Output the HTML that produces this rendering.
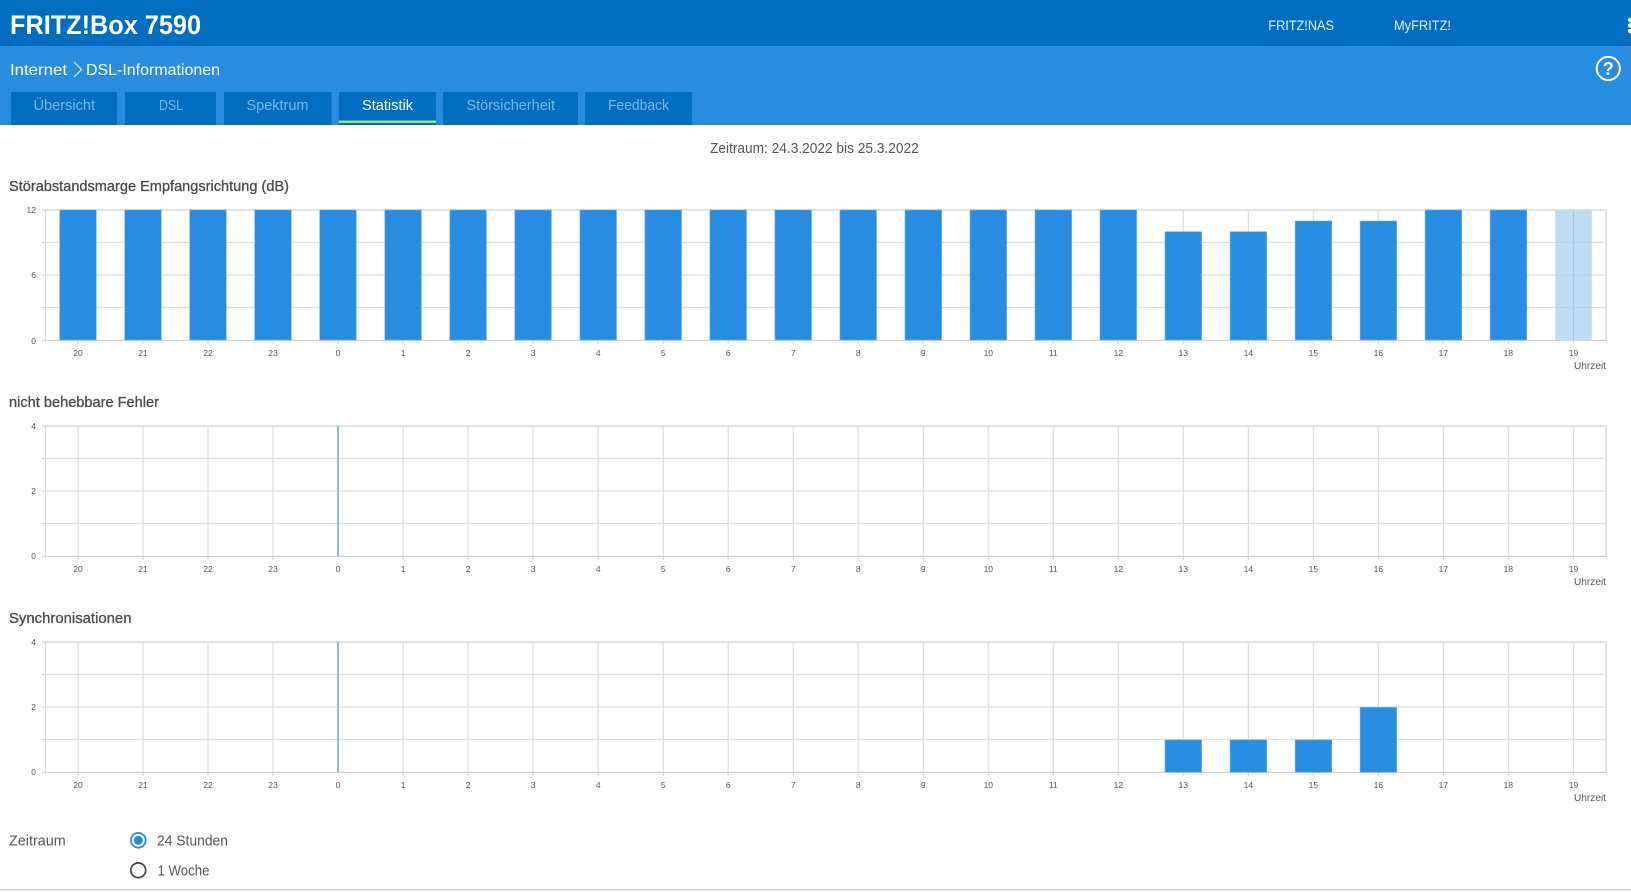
<!DOCTYPE html>
<html lang="de">
<head>
<meta charset="utf-8">
<title>FRITZ!Box 7590</title>
<style>
html,body{margin:0;padding:0;background:#fff;width:1631px;height:892px;overflow:hidden}
svg{display:block;font-family:"Liberation Sans",sans-serif}
.tick{font-size:8.5px;fill:#555;text-anchor:middle}
.yl{font-size:8.5px;fill:#555;text-anchor:end}
.tt{font-size:15px;fill:#4a4a4a;stroke:#4a4a4a;stroke-width:.3px}
.tab{font-size:15px;fill:#7ab6e8}
.bar{fill:#288ce0;stroke:#6db2ec;stroke-width:.6}
.lbl{font-size:15px;fill:#555}
</style>
</head>
<body>
<svg width="1631" height="892" viewBox="0 0 1631 892" xmlns="http://www.w3.org/2000/svg">
<defs>
<g id="grid">
<g stroke="#dedede" stroke-width="1.300" fill="none">
<path d="M45 242.5H1606M45 275H1606M45 307.5H1606"/>
<path d="M78 210V344M143 210V344M208 210V344M273 210V344M338 210V344M403.1 210V344M468.1 210V344M533.1 210V344M598.2 210V344M663.2 210V344M728.2 210V344M793.2 210V344M858.2 210V344M923.3 210V344M988.3 210V344M1053.3 210V344M1118.3 210V344M1183.3 210V344M1248.4 210V344M1313.4 210V344M1378.4 210V344M1443.4 210V344M1508.4 210V344M1573.5 210V344"/>
</g>
<path d="M42 210H1607M1606 210V340" stroke="#e2e2e2" stroke-width="2" fill="none"/>
<path d="M45.5 210V340" stroke="#d4d4d4" stroke-width="1.100" fill="none"/>
<path d="M42 242.5H45M42 275H45M42 307.5H45" stroke="#ccc" stroke-width="1" fill="none"/>
<path d="M42 340.3H1607" stroke="#cfcfcf" stroke-width="1.200" fill="none"/>
</g>
</defs>

<rect x="0" y="0" width="1631" height="46" fill="#006ec0"/>
<rect x="0" y="46" width="1631" height="79" fill="#288ce0"/>
<text x="10" y="34" font-size="27" font-weight="700" fill="#fff" textLength="191" lengthAdjust="spacingAndGlyphs">FRITZ!Box 7590</text>
<text x="1268.300" y="30" font-size="14" fill="#e2f3ff" textLength="65.700" lengthAdjust="spacingAndGlyphs">FRITZ!NAS</text>
<text x="1394" y="30" font-size="14" fill="#e2f3ff" textLength="57" lengthAdjust="spacingAndGlyphs">MyFRITZ!</text>
<g fill="#fff"><circle cx="1630" cy="20" r="2.200"/><circle cx="1630" cy="25.500" r="2.200"/><circle cx="1630" cy="31" r="2.200"/></g>

<text x="10" y="75" font-size="16" fill="#fff" textLength="57" lengthAdjust="spacingAndGlyphs">Internet</text>
<path d="M74 62L81.500 69.500L74 77" stroke="#e8f3fc" stroke-width="1.100" fill="none"/>
<text x="86" y="75" font-size="16" fill="#fff" textLength="134" lengthAdjust="spacingAndGlyphs">DSL-Informationen</text>

<circle cx="1608.300" cy="68.500" r="11.600" fill="none" stroke="#fff" stroke-width="2"/>
<text x="1608.300" y="75" font-size="18" font-weight="700" fill="#fff" text-anchor="middle">?</text>

<g fill="#006ec0">
<rect x="11" y="92" width="106" height="33"/>
<rect x="125" y="92" width="91" height="33"/>
<rect x="224" y="92" width="107.500" height="33"/>
<rect x="339" y="92" width="97" height="33"/>
<rect x="443" y="92" width="135" height="33"/>
<rect x="585" y="92" width="107" height="33"/>
</g>
<rect x="339" y="120.500" width="97" height="2.500" fill="#a4e07a"/>
<text class="tab" x="33.500" y="110" textLength="61.500" lengthAdjust="spacingAndGlyphs">Übersicht</text>
<text class="tab" x="159" y="110" textLength="24" lengthAdjust="spacingAndGlyphs">DSL</text>
<text class="tab" x="246.500" y="110" textLength="62" lengthAdjust="spacingAndGlyphs">Spektrum</text>
<text class="tab" x="362" y="110" textLength="51" lengthAdjust="spacingAndGlyphs" style="fill:#fff">Statistik</text>
<text class="tab" x="466.500" y="110" textLength="88.500" lengthAdjust="spacingAndGlyphs">Störsicherheit</text>
<text class="tab" x="608" y="110" textLength="61" lengthAdjust="spacingAndGlyphs">Feedback</text>

<text class="lbl" x="710" y="153" textLength="208.700" lengthAdjust="spacingAndGlyphs">Zeitraum: 24.3.2022 bis 25.3.2022</text>

<!-- Chart 1 -->
<text class="tt" x="9" y="191" textLength="280" lengthAdjust="spacingAndGlyphs">Störabstandsmarge Empfangsrichtung (dB)</text>
<use href="#grid"/>
<g class="bars">
<rect class="bar" x="59.700" y="210" width="36.600" height="130"/>
<rect class="bar" x="124.700" y="210" width="36.600" height="130"/>
<rect class="bar" x="189.700" y="210" width="36.600" height="130"/>
<rect class="bar" x="254.700" y="210" width="36.600" height="130"/>
<rect class="bar" x="319.700" y="210" width="36.600" height="130"/>
<rect class="bar" x="384.800" y="210" width="36.600" height="130"/>
<rect class="bar" x="449.800" y="210" width="36.600" height="130"/>
<rect class="bar" x="514.800" y="210" width="36.600" height="130"/>
<rect class="bar" x="579.900" y="210" width="36.600" height="130"/>
<rect class="bar" x="644.900" y="210" width="36.600" height="130"/>
<rect class="bar" x="709.900" y="210" width="36.600" height="130"/>
<rect class="bar" x="774.900" y="210" width="36.600" height="130"/>
<rect class="bar" x="839.900" y="210" width="36.600" height="130"/>
<rect class="bar" x="905" y="210" width="36.600" height="130"/>
<rect class="bar" x="970" y="210" width="36.600" height="130"/>
<rect class="bar" x="1035" y="210" width="36.600" height="130"/>
<rect class="bar" x="1100" y="210" width="36.600" height="130"/>
<rect class="bar" x="1165" y="231.700" width="36.600" height="108.300"/>
<rect class="bar" x="1230.100" y="231.700" width="36.600" height="108.300"/>
<rect class="bar" x="1295.100" y="221" width="36.600" height="119"/>
<rect class="bar" x="1360.100" y="221" width="36.600" height="119"/>
<rect class="bar" x="1425.100" y="210" width="36.600" height="130"/>
<rect class="bar" x="1490.100" y="210" width="36.600" height="130"/>
<rect x="1555.200" y="210" width="36.600" height="130" fill="#bedcf4"/>
<path d="M1573.500 210V340" stroke="#a5c8e4" stroke-width="1.200"/>
<path d="M1555.200 242.500H1591.800M1555.200 275H1591.800M1555.200 307.500H1591.800" stroke="#b2d2ec" stroke-width="1"/>
</g>
<text class="yl" x="36" y="213">12</text><text class="yl" x="36" y="278">6</text><text class="yl" x="36" y="344">0</text>
<g class="tick"><text x="78" y="356">20</text><text x="143" y="356">21</text><text x="208" y="356">22</text><text x="273" y="356">23</text><text x="338" y="356">0</text><text x="403.100" y="356">1</text><text x="468.100" y="356">2</text><text x="533.100" y="356">3</text><text x="598.200" y="356">4</text><text x="663.200" y="356">5</text><text x="728.200" y="356">6</text><text x="793.200" y="356">7</text><text x="858.200" y="356">8</text><text x="923.300" y="356">9</text><text x="988.300" y="356">10</text><text x="1053.300" y="356">11</text><text x="1118.300" y="356">12</text><text x="1183.300" y="356">13</text><text x="1248.400" y="356">14</text><text x="1313.400" y="356">15</text><text x="1378.400" y="356">16</text><text x="1443.400" y="356">17</text><text x="1508.400" y="356">18</text><text x="1573.500" y="356">19</text></g>
<text x="1574" y="369" font-size="10.500" fill="#555" textLength="32" lengthAdjust="spacingAndGlyphs">Uhrzeit</text>

<!-- Chart 2 -->
<text class="tt" x="9" y="407" textLength="150" lengthAdjust="spacingAndGlyphs">nicht behebbare Fehler</text>
<use href="#grid" y="216"/>
<path d="M338 426V556" stroke="#6fa6d2" stroke-width="1.500"/>
<text class="yl" x="36" y="429">4</text><text class="yl" x="36" y="494">2</text><text class="yl" x="36" y="559.200">0</text>
<g class="tick"><text x="78" y="572">20</text><text x="143" y="572">21</text><text x="208" y="572">22</text><text x="273" y="572">23</text><text x="338" y="572">0</text><text x="403.100" y="572">1</text><text x="468.100" y="572">2</text><text x="533.100" y="572">3</text><text x="598.200" y="572">4</text><text x="663.200" y="572">5</text><text x="728.200" y="572">6</text><text x="793.200" y="572">7</text><text x="858.200" y="572">8</text><text x="923.300" y="572">9</text><text x="988.300" y="572">10</text><text x="1053.300" y="572">11</text><text x="1118.300" y="572">12</text><text x="1183.300" y="572">13</text><text x="1248.400" y="572">14</text><text x="1313.400" y="572">15</text><text x="1378.400" y="572">16</text><text x="1443.400" y="572">17</text><text x="1508.400" y="572">18</text><text x="1573.500" y="572">19</text></g>
<text x="1574" y="585" font-size="10.500" fill="#555" textLength="32" lengthAdjust="spacingAndGlyphs">Uhrzeit</text>

<!-- Chart 3 -->
<text class="tt" x="9" y="623" textLength="122.500" lengthAdjust="spacingAndGlyphs">Synchronisationen</text>
<use href="#grid" y="432"/>
<path d="M338 642V772" stroke="#6fa6d2" stroke-width="1.500"/>
<rect class="bar" x="1165" y="739.800" width="36.600" height="32.500"/>
<rect class="bar" x="1230.100" y="739.800" width="36.600" height="32.500"/>
<rect class="bar" x="1295.100" y="739.800" width="36.600" height="32.500"/>
<rect class="bar" x="1360.100" y="707.300" width="36.600" height="65"/>
<text class="yl" x="36" y="645">4</text><text class="yl" x="36" y="710">2</text><text class="yl" x="36" y="775.200">0</text>
<g class="tick"><text x="78" y="788">20</text><text x="143" y="788">21</text><text x="208" y="788">22</text><text x="273" y="788">23</text><text x="338" y="788">0</text><text x="403.100" y="788">1</text><text x="468.100" y="788">2</text><text x="533.100" y="788">3</text><text x="598.200" y="788">4</text><text x="663.200" y="788">5</text><text x="728.200" y="788">6</text><text x="793.200" y="788">7</text><text x="858.200" y="788">8</text><text x="923.300" y="788">9</text><text x="988.300" y="788">10</text><text x="1053.300" y="788">11</text><text x="1118.300" y="788">12</text><text x="1183.300" y="788">13</text><text x="1248.400" y="788">14</text><text x="1313.400" y="788">15</text><text x="1378.400" y="788">16</text><text x="1443.400" y="788">17</text><text x="1508.400" y="788">18</text><text x="1573.500" y="788">19</text></g>
<text x="1574" y="801" font-size="10.500" fill="#555" textLength="32" lengthAdjust="spacingAndGlyphs">Uhrzeit</text>

<!-- Radio group -->
<text class="lbl" x="9" y="845.500" textLength="56.700" lengthAdjust="spacingAndGlyphs">Zeitraum</text>
<circle cx="138.300" cy="840.300" r="7.400" fill="#fff" stroke="#288ce0" stroke-width="1.800"/>
<circle cx="138.300" cy="840.300" r="4.500" fill="#288ce0"/>
<text class="lbl" x="157" y="845.500" textLength="71" lengthAdjust="spacingAndGlyphs">24 Stunden</text>
<circle cx="138.300" cy="870.300" r="7.400" fill="#fff" stroke="#444" stroke-width="1.700"/>
<text class="lbl" x="157.500" y="875.500" textLength="52" lengthAdjust="spacingAndGlyphs">1 Woche</text>
<rect x="0" y="889" width="1631" height="1.200" fill="#cfcfcf"/>
</svg>
</body>
</html>
